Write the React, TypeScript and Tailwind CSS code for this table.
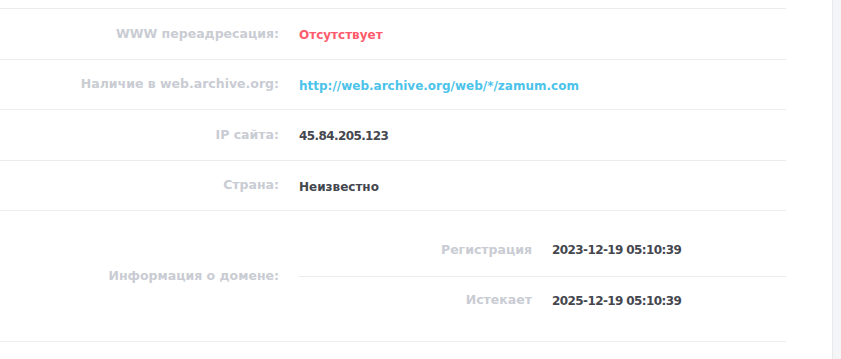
const labelCls = 'text-right text-[12.5px] font-bold text-[#c9ccd3]';
const valueCls = 'text-[12px] font-bold text-[#45474f]';
const numCls = `${valueCls} tracking-[-0.6px]`;

function Row({ label, h, children }: { label: string; h: string; children: React.ReactNode }) {
  return (
    <div className={`flex ${h} items-center border-b border-[#ececec]`}>
      <div className={`w-[289px] shrink-0 pr-[10px] ${labelCls}`}>{label}</div>
      <div className="pl-[10px]">{children}</div>
    </div>
  );
}

export default function App() {
  return (
    <div
      className="flex h-[359px] w-[841px] overflow-hidden bg-white"
      style={{ fontFamily: '"DejaVu Sans", sans-serif' }}
    >
      <div className="w-[786px] shrink-0">
        <div className="h-[9px] border-b border-[#ececec]" />
        <Row label="WWW переадресация:" h="h-[51px]">
          <span className="text-[12px] font-bold text-[#ff5b6c]">Отсутствует</span>
        </Row>
        <Row label="Наличие в web.archive.org:" h="h-[50px]">
          <span className="text-[12px] font-bold text-[#4cc3ea]">http://web.archive.org/web/*/zamum.com</span>
        </Row>
        <Row label="IP сайта:" h="h-[51px]">
          <span className={numCls}>45.84.205.123</span>
        </Row>
        <Row label="Страна:" h="h-[50px]">
          <span className={valueCls}>Неизвестно</span>
        </Row>
        <div className="flex h-[131px] items-center border-b border-[#ececec]">
          <div className={`w-[289px] shrink-0 pr-[10px] ${labelCls}`}>Информация о домене:</div>
          <div className="ml-[10px] flex-1 self-stretch">
            <div className="flex h-[66px] items-center border-b border-[#ececec] pt-[13px]">
              <div className={`w-[243px] shrink-0 pr-[10px] ${labelCls}`}>Регистрация</div>
              <div className={`pl-[10px] ${numCls}`}>2023-12-19 05:10:39</div>
            </div>
            <div className="flex h-[64px] items-center pb-[17px]">
              <div className={`w-[243px] shrink-0 pr-[10px] ${labelCls}`}>Истекает</div>
              <div className={`pl-[10px] ${numCls}`}>2025-12-19 05:10:39</div>
            </div>
          </div>
        </div>
      </div>
      <div className="flex-1" />
      <div className="w-[9px] border-l border-[#e8e9ec] bg-[#f4f5f7]" />
    </div>
  );
}
